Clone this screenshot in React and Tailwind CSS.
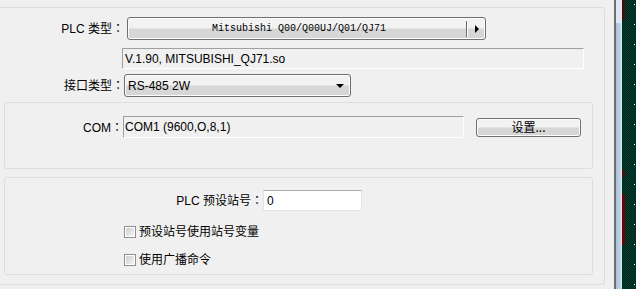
import React from 'react';

const Colon = () => <span className="font-['Noto_Sans_CJK_JP',sans-serif]">：</span>;

const Win7Button = ({ className = '', children }) => (
  <div
    className={`flex items-center rounded-[3px] border border-[#707070] bg-gradient-to-b from-[#f2f2f2] from-45% to-[#d6d6d6] to-55% shadow-[inset_0_0_0_1px_#fcfcfc] ${className}`}
  >
    {children}
  </div>
);

const Checkbox = ({ label }) => (
  <div className="flex h-[16px] items-center gap-[3px]">
    <div className="h-[12px] w-[12px] border border-[#8e8f8f] bg-white p-[1px]">
      <div className="h-full w-full bg-gradient-to-br from-[#cfcfcf] to-[#f4f4f4]" />
    </div>
    <span className="leading-none">{label}</span>
  </div>
);

export default function App() {
  const dots = Array.from({ length: 15 });

  return (
    <div className="flex h-[289px] w-[636px] overflow-hidden bg-[#f0f0f0] font-['Liberation_Sans','Noto_Sans_CJK_SC',sans-serif] text-[12px] text-black">
      {/* main panel */}
      <div className="w-[614px] pt-[7px]">
        <div className="h-[278px] w-[605px] rounded-r-[3px] border-y border-r border-[#d5dfe5] pt-[9px]">
          {/* PLC 类型 */}
          <div className="flex h-[23px] items-center">
            <div className="w-[124px] text-right">PLC 类型<Colon /></div>
            <Win7Button className="ml-[3px] h-[23px] w-[359px]">
              <div className="flex-1 pl-[4px] text-center font-['Liberation_Mono',monospace] text-[10px]">
                Mitsubishi Q00/Q00UJ/Q01/QJ71
              </div>
              <div className="h-[16px] w-[2px] border-l border-[#6a6a6a] border-r border-r-white" />
              <div className="flex w-[17px] justify-center">
                <div className="h-0 w-0 border-y-[4px] border-l-[4px] border-y-transparent border-l-black" />
              </div>
            </Win7Button>
          </div>

          {/* version */}
          <div className="mt-[8px] ml-[122px] flex h-[21px] w-[462px] items-center border border-[#a0a0a0] border-r-white border-b-white pl-[2px]">
            V.1.90, MITSUBISHI_QJ71.so
          </div>

          {/* 接口类型 */}
          <div className="mt-[5px] flex h-[23px] items-center">
            <div className="w-[124px] text-right">接口类型<Colon /></div>
            <Win7Button className="h-[23px] w-[227px] pr-[6px] pl-[3px]">
              <span className="flex-1">RS-485 2W</span>
              <div className="h-0 w-0 border-x-[4px] border-t-[4px] border-x-transparent border-t-black" />
            </Win7Button>
          </div>

          {/* COM group */}
          <div className="mt-[5px] ml-[4px] h-[67px] w-[589px] rounded-[3px] border border-[#d5dfe5] pt-[13px]">
            <div className="flex items-center">
              <div className="w-[118px] text-right">COM<Colon /></div>
              <div className="flex h-[22px] w-[341px] items-center border border-[#a0a0a0] border-r-white border-b-white pl-[1px]">
                COM1 (9600,O,8,1)
              </div>
              <Win7Button className="ml-[12px] h-[19px] w-[105px] justify-center">
                <span className="font-['Noto_Sans_CJK_SC',sans-serif] leading-none">设置...</span>
              </Win7Button>
            </div>
          </div>

          {/* station group */}
          <div className="mt-[8px] ml-[4px] h-[98px] w-[589px] rounded-[3px] border border-[#d5dfe5] pt-[12px]">
            <div className="flex items-center">
              <div className="w-[258px] text-right">PLC 预设站号<Colon /></div>
              <div className="flex h-[21px] w-[99px] items-center border border-[#e2e3ea] border-t-[#abadb3] bg-white pl-[3px]">
                0
              </div>
            </div>
            <div className="mt-[13px] ml-[119px]">
              <Checkbox label="预设站号使用站号变量" />
            </div>
            <div className="mt-[12px] ml-[119px]">
              <Checkbox label="使用广播命令" />
            </div>
          </div>
        </div>
      </div>

      {/* splitter strip */}
      <div className="flex w-[8px] flex-col border-l-2 border-[#6d6d6d]">
        <div className="h-[23px] bg-[#dfe7f0]" />
        <div className="flex-1 border-r border-[#dde6f0] bg-gradient-to-r from-[#a9c1dd] to-[#c6d6ea]" />
      </div>

      {/* canvas edge */}
      <div className="flex flex-1 bg-[#00382a] bg-[repeating-conic-gradient(#003d2c_0_25%,#00261d_0_50%)] bg-[length:2px_2px]">
        <div className="flex w-[3px] flex-col">
          <div className="h-[20px] bg-[#4a0d0d]" />
          <div className="h-[150px]" />
          <div className="h-[7px] bg-[#4a0d0d]" />
          <div className="h-[17px]" />
          <div className="h-[51px] bg-[#6b0404]" />
        </div>
        <div className="ml-[9px] flex flex-col gap-[19px] pt-[4px]">
          {dots.map((_, i) => (
            <div key={i} className="h-[1px] w-[1px] bg-white" />
          ))}
        </div>
      </div>
    </div>
  );
}
